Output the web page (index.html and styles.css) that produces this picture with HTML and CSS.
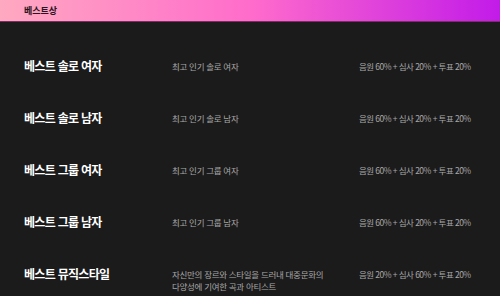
FILE: index.html
```html
<!DOCTYPE html>
<html lang="ko">
<head>
<meta charset="utf-8">
<link rel="stylesheet" href="styles.css">
</head>
<body>
<header class="topbar"><span class="topbar-title">베스트상</span></header>
<main class="awards">
  <div class="row">
    <div class="name">베스트 솔로 여자</div>
    <div class="desc">최고 인기 솔로 여자</div>
    <div class="ratio">음원 60% + 심사 20% + 투표 20%</div>
  </div>
  <div class="row">
    <div class="name">베스트 솔로 남자</div>
    <div class="desc">최고 인기 솔로 남자</div>
    <div class="ratio">음원 60% + 심사 20% + 투표 20%</div>
  </div>
  <div class="row">
    <div class="name">베스트 그룹 여자</div>
    <div class="desc">최고 인기 그룹 여자</div>
    <div class="ratio">음원 60% + 심사 20% + 투표 20%</div>
  </div>
  <div class="row">
    <div class="name">베스트 그룹 남자</div>
    <div class="desc">최고 인기 그룹 남자</div>
    <div class="ratio">음원 60% + 심사 20% + 투표 20%</div>
  </div>
  <div class="row">
    <div class="name">베스트 뮤직스타일</div>
    <div class="desc">자신만의 장르와 스타일을 드러내 대중문화의<br>다양성에 기여한 곡과 아티스트</div>
    <div class="ratio">음원 20% + 심사 60% + 투표 20%</div>
  </div>
</main>
</body>
</html>
```
FILE: styles.css
```css
html, body {
  margin: 0;
  padding: 0;
}
body {
  background: #1b1b1b;
  font-family: "Noto Sans CJK KR", "Noto Sans", sans-serif;
  width: 500px;
  height: 296px;
  overflow: hidden;
}
.topbar {
  height: 21px;
  display: flex;
  align-items: center;
  padding: 0 24px;
  background: linear-gradient(90deg, #ffa9c1 0%, #ff6ccb 50%, #c21be9 100%);
  border-bottom: 1px solid #7a2e62;
}
.topbar-title {
  font-size: 9px;
  font-weight: 700;
  color: #2a1420;
  line-height: 12px;
}
.awards {
  padding: 18px 0 0 24px;
}
.row {
  display: grid;
  grid-template-columns: 148px 187px 1fr;
  align-items: start;
  padding: 18px 0;
}
.name {
  font-size: 12px;
  font-weight: 700;
  letter-spacing: -0.7px;
  color: #ffffff;
  line-height: 16px;
  white-space: nowrap;
}
.desc, .ratio {
  font-size: 8.5px;
  letter-spacing: -0.3px;
  color: #a8a8a8;
  line-height: 12px;
  margin-top: 2px;
  white-space: nowrap;
}
.ratio {
  letter-spacing: -0.55px;
}
```
